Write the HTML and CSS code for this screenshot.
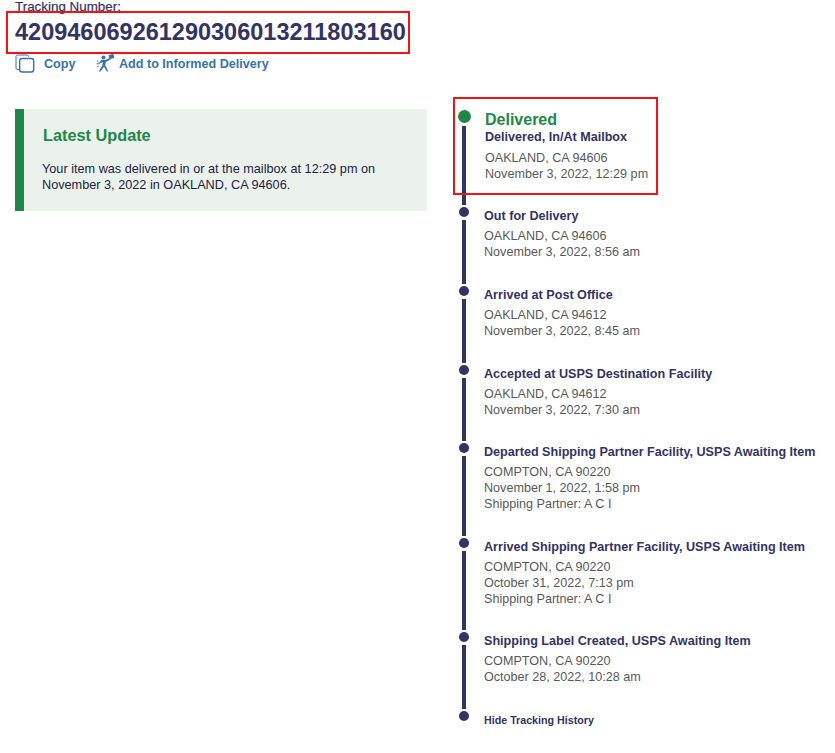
FILE: index.html
```html
<!DOCTYPE html>
<html lang="en">
<head>
<meta charset="utf-8">
<title>Tracking</title>
<link rel="stylesheet" href="styles.css">
</head>
<body>
<div class="page">
  <header class="head">
    <div class="label">Tracking Number:</div>
    <div class="number">420946069261290306013211803160</div>
    <div class="actions">
      <a class="action copy">
        <svg class="ico-copy" width="20" height="19" viewBox="0 0 20 19" fill="none" stroke="#3573b1">
          <path d="M4 15.5H2.5A1.5 1.5 0 0 1 1 14V2.5A1.5 1.5 0 0 1 2.5 1H12A1.5 1.5 0 0 1 13.500 2.500V3" stroke-width="1"/>
          <rect x="4.700" y="4.500" width="14" height="13.500" rx="2.500" stroke-width="1.400"/>
        </svg>
        <span>Copy</span>
      </a>
      <a class="action inform">
        <svg class="ico-inform" width="19" height="19" viewBox="0 0 19 19" fill="#3573b1">
          <circle cx="7.500" cy="3.500" r="2"/>
          <path d="M5 6h4l5-2 .6 1.200-4.600 2.800-.8 3.300 3.200 6.200h-1.600l-2.800-4.800-3.600 4.800H2.800l3.600-6.200.5-3-2.400.6-1.700 1.300-.6-.9 2.200-1.800z"/>
          <rect x="13" y="0.500" width="5" height="4" rx=".6" transform="rotate(-15 15.500 2.500)"/>
          <path d="M.8 6.500l2 1.700M.6 9.800h2.200M.8 13l2-1" stroke="#3573b1" stroke-width=".9" fill="none"/>
        </svg>
        <span>Add to Informed Delivery</span>
      </a>
    </div>
  </header>

  <div class="columns">
    <section class="update">
      <h2 class="update-title">Latest Update</h2>
      <p class="update-text">Your item was delivered in or at the mailbox at 12:29 pm on November 3, 2022 in OAKLAND, CA 94606.</p>
    </section>

    <ol class="timeline">
      <li class="event current">
        <div class="rail"><span class="dot"></span><span class="line"></span></div>
        <div class="info">
          <div class="status">Delivered</div>
          <div class="title">Delivered, In/At Mailbox</div>
          <div class="detail">OAKLAND, CA 94606</div>
          <div class="detail">November 3, 2022, 12:29 pm</div>
        </div>
      </li>
      <li class="event">
        <div class="rail"><span class="dot"></span><span class="line"></span></div>
        <div class="info">
          <div class="title">Out for Delivery</div>
          <div class="detail">OAKLAND, CA 94606</div>
          <div class="detail">November 3, 2022, 8:56 am</div>
        </div>
      </li>
      <li class="event">
        <div class="rail"><span class="dot"></span><span class="line"></span></div>
        <div class="info">
          <div class="title">Arrived at Post Office</div>
          <div class="detail">OAKLAND, CA 94612</div>
          <div class="detail">November 3, 2022, 8:45 am</div>
        </div>
      </li>
      <li class="event">
        <div class="rail"><span class="dot"></span><span class="line"></span></div>
        <div class="info">
          <div class="title">Accepted at USPS Destination Facility</div>
          <div class="detail">OAKLAND, CA 94612</div>
          <div class="detail">November 3, 2022, 7:30 am</div>
        </div>
      </li>
      <li class="event">
        <div class="rail"><span class="dot"></span><span class="line"></span></div>
        <div class="info">
          <div class="title">Departed Shipping Partner Facility, USPS Awaiting Item</div>
          <div class="detail">COMPTON, CA 90220</div>
          <div class="detail">November 1, 2022, 1:58 pm</div>
          <div class="detail">Shipping Partner: A C I</div>
        </div>
      </li>
      <li class="event">
        <div class="rail"><span class="dot"></span><span class="line"></span></div>
        <div class="info">
          <div class="title">Arrived Shipping Partner Facility, USPS Awaiting Item</div>
          <div class="detail">COMPTON, CA 90220</div>
          <div class="detail">October 31, 2022, 7:13 pm</div>
          <div class="detail">Shipping Partner: A C I</div>
        </div>
      </li>
      <li class="event">
        <div class="rail"><span class="dot"></span><span class="line"></span></div>
        <div class="info">
          <div class="title">Shipping Label Created, USPS Awaiting Item</div>
          <div class="detail">COMPTON, CA 90220</div>
          <div class="detail">October 28, 2022, 10:28 am</div>
        </div>
      </li>
      <li class="event last">
        <div class="rail"><span class="dot"></span></div>
        <div class="info"><a class="toggle">Hide Tracking History</a></div>
      </li>
    </ol>
  </div>
</div>
<div class="mark mark-number"></div>
<div class="mark mark-delivered"></div>
</body>
</html>
```

FILE: styles.css
```css
* { box-sizing: border-box; }
html, body { margin: 0; padding: 0; background: #fff; }
body {
  font-family: "Liberation Sans", Arial, sans-serif;
  color: #333366;
  position: relative;
  height: 753px;
  overflow: hidden;
}
.page { padding: 0 0 0 15px; }

.head { height: 97px; }
.label {
  font-size: 13.4px;
  line-height: 13px;
  font-weight: 400;
  color: #333366;
  -webkit-text-stroke: 0.2px #333366;
}
.number {
  font-size: 23.5px;
  line-height: 30px;
  font-weight: 700;
  margin-top: 4px;
  color: #333366;
}
.actions {
  display: flex;
  align-items: center;
  height: 20px;
  margin-top: 6px;
}
.action {
  display: flex;
  align-items: center;
  font-size: 12.6px;
  font-weight: 700;
  color: #3573b1;
}
.action span { margin-top: 2px; }
.copy { width: 81px; }
.ico-copy { margin-right: 9px; flex: none; }
.ico-inform { margin-right: 4px; flex: none; }

.columns {
  display: grid;
  grid-template-columns: 412px 1fr;
  column-gap: 27px;
  align-items: start;
}

.update {
  margin-top: 12px;
  height: 102px;
  background: #ebf2ec;
  border-left: 9px solid #218748;
  padding: 17px 18px 0 18px;
}
.update-title {
  margin: 0 0 0 1px;
  font-size: 16.3px;
  line-height: 18px;
  font-weight: 700;
  color: #218748;
}
.update-text {
  margin: 17px 0 0;
  font-size: 12.7px;
  line-height: 16px;
  color: #222244;
}

.timeline { list-style: none; margin: 0; padding: 0; }
.event {
  display: grid;
  grid-template-columns: 20px 1fr;
  column-gap: 10px;
}
.rail {
  display: flex;
  flex-direction: column;
  align-items: center;
}
.dot {
  width: 10px;
  height: 10px;
  border-radius: 50%;
  background: #333366;
  flex: none;
}
.line {
  width: 4px;
  flex: 1;
  margin-top: 3px;
  margin-bottom: 2px;
  background: #333366;
}
.info { padding: 1px 0 25.6px 0; }
.title {
  font-size: 12.6px;
  line-height: 16px;
  font-weight: 700;
  color: #333366;
  margin-bottom: 4px;
  white-space: nowrap;
}
.detail {
  font-size: 12.6px;
  line-height: 16px;
  color: #595959;
}

.current { height: 110.4px; }
.current .rail { padding-top: 12.5px; }
.current .dot { width: 13px; height: 13px; background: #218748; }
.current .info { padding: 14px 0 0 1px; }
.status {
  font-size: 16px;
  line-height: 18px;
  font-weight: 700;
  color: #218748;
}
.current .title { margin-bottom: 4px; line-height: 17px; }

.last .info { padding: 2px 0 0; }
.toggle {
  display: block;
  font-size: 10.7px;
  line-height: 14px;
  font-weight: 700;
  color: #333366;
}

/* annotation boxes drawn over the page */
.mark {
  position: absolute;
  border: 2px solid #f21414;
  pointer-events: none;
}
.mark-number { left: 6px; top: 11px; width: 404px; height: 43px; }
.mark-delivered { left: 453px; top: 97px; width: 205px; height: 98px; }
```
